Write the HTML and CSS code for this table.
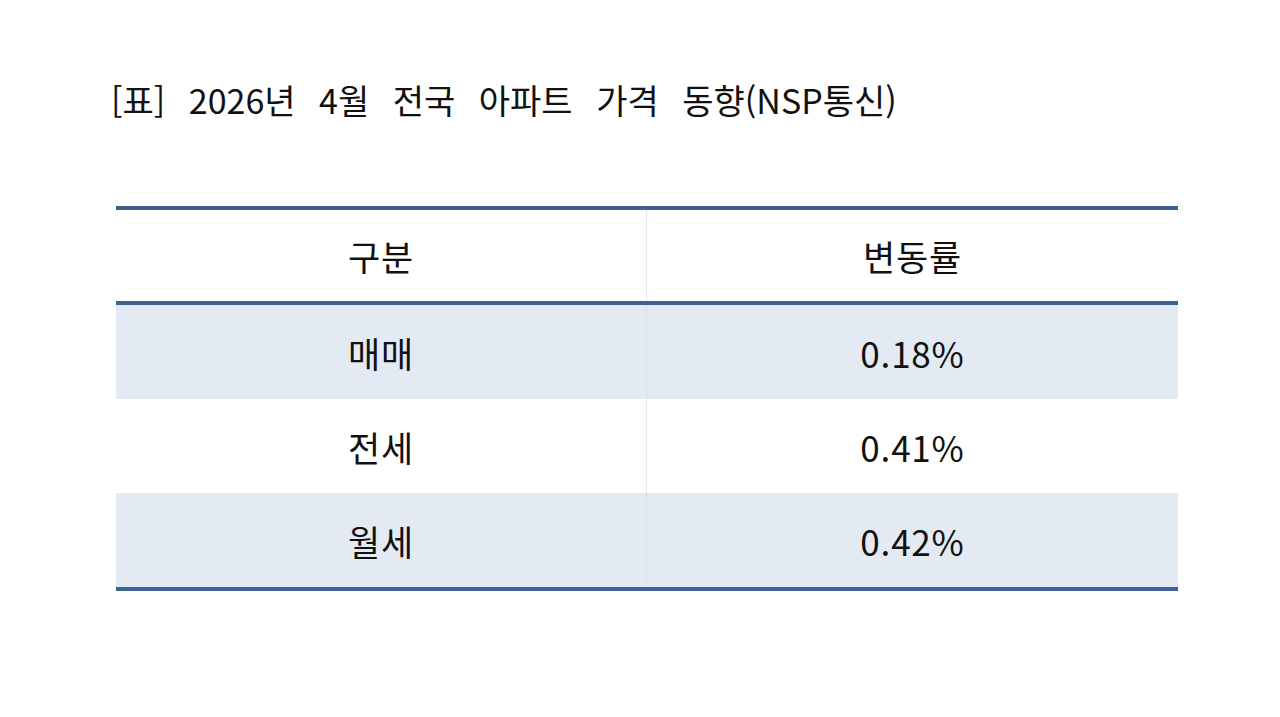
FILE: index.html
```html
<!DOCTYPE html>
<html lang="ko">
<head>
<meta charset="utf-8">
<link rel="stylesheet" href="styles.css">
</head>
<body>
<div class="page">
  <h1 class="title">[표] 2026년 4월 전국 아파트 가격 동향(NSP통신)</h1>
  <table class="data">
    <thead>
      <tr><th>구분</th><th>변동률</th></tr>
    </thead>
    <tbody>
      <tr class="shade"><td>매매</td><td>0.18%</td></tr>
      <tr><td>전세</td><td>0.41%</td></tr>
      <tr class="shade"><td>월세</td><td>0.42%</td></tr>
    </tbody>
  </table>
</div>
</body>
</html>
```
FILE: styles.css
```css
html, body {
  margin: 0;
  padding: 0;
  background: #ffffff;
}
body {
  font-family: "Noto Sans CJK KR", "Noto Sans", sans-serif;
  color: #111;
}
.page {
  padding: 76px 102px 0 111px;
}
.title {
  margin: 0;
  font-size: 34px;
  font-weight: 400;
  line-height: 48px;
  word-spacing: 14px;
  letter-spacing: 0;
}
.data {
  margin: 82px 0 0 5px;
  width: 1062px;
  border-collapse: collapse;
  table-layout: fixed;
  border-top: 4px solid #3c6292;
  border-bottom: 4px solid #3c6292;
}
.data th, .data td {
  font-size: 35px;
  font-weight: 400;
  text-align: center;
  vertical-align: middle;
  padding: 0;
  letter-spacing: 0.8px;
}
.data th {
  height: 91px;
  border-bottom: 4px solid #3c6292;
}
.data td {
  height: 94px;
}
.data th:first-child, .data td:first-child {
  width: 530px;
  border-right: 1px solid #e4e9f0;
}
.shade td {
  background: #e3eaf4;
}
.shade td:first-child {
  border-right-color: #d8e0eb;
}
```
